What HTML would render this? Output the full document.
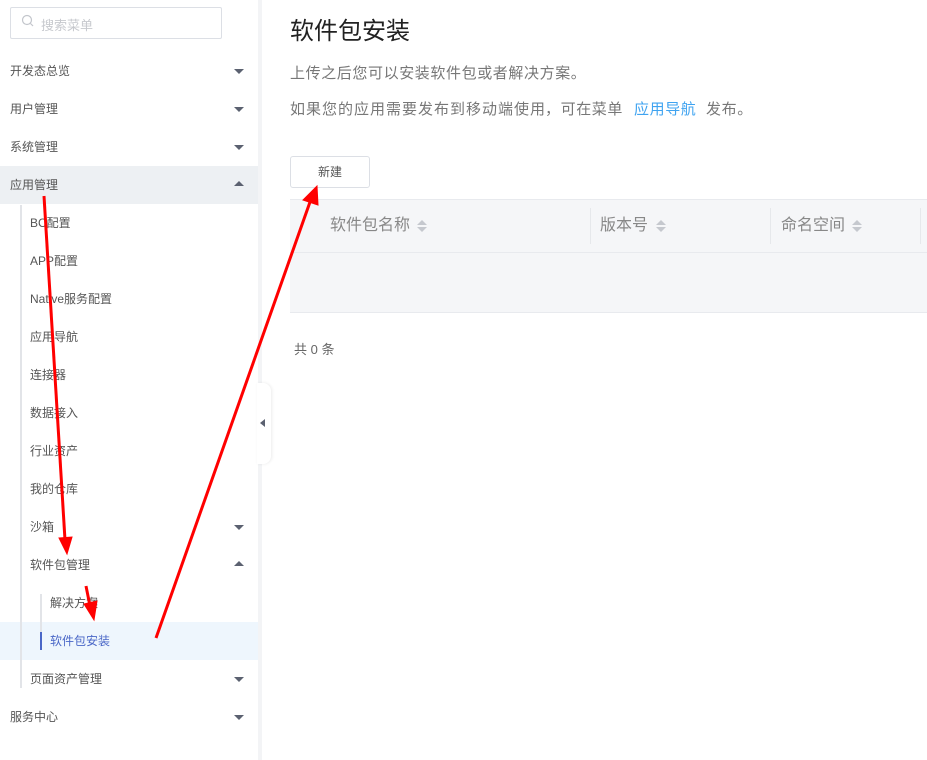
<!DOCTYPE html>
<html><head><meta charset="utf-8"><style>
*{margin:0;padding:0;box-sizing:border-box}
body{width:927px;height:760px;overflow:hidden;background:#fff;font-family:"Liberation Sans","Noto Sans CJK SC",sans-serif;position:relative}
.a{position:absolute;white-space:nowrap}
.m{font-size:12px;color:#555;line-height:14px}
.tri{position:absolute;left:234px;width:0;height:0;border-left:5px solid transparent;border-right:5px solid transparent}
.dn{border-top:5px solid #5b6170}
.up{border-bottom:5px solid #5b6170}
.srt{position:absolute;width:0;height:0;border-left:5px solid transparent;border-right:5px solid transparent}
.p{font-size:15px;color:#777;line-height:20px;letter-spacing:0.6px}
</style></head><body>
<div class="a" style="left:258px;top:0;width:4px;height:760px;background:#f3f4f6"></div>
<div class="a" style="left:10px;top:7px;width:212px;height:32px;border:1px solid #dcdfe5;border-radius:2px"></div>
<svg class="a" style="left:21px;top:14px" width="14" height="14"><circle cx="6" cy="6" r="4.5" fill="none" stroke="#c3c6cc" stroke-width="1.2"/><line x1="9.5" y1="9.5" x2="12" y2="12" stroke="#c3c6cc" stroke-width="1.2"/></svg>
<div class="a" style="left:41px;top:15px;font-size:13px;color:#c7c9ce">搜索菜单</div>

<div class="a" style="left:0;top:166px;width:258px;height:38px;background:#edf0f3"></div>
<div class="a" style="left:0;top:622px;width:258px;height:38px;background:#eef6fd"></div>
<div class="a" style="left:20px;top:205px;width:2px;height:483px;background:#e2e4e8"></div>
<div class="a" style="left:40px;top:594px;width:2px;height:56px;background:#e2e4e8"></div>
<div class="a" style="left:40px;top:632px;width:2px;height:18px;background:#4a67c7"></div>

<div class="a m" style="left:10px;top:64px">开发态总览</div><div class="tri dn" style="top:69px"></div>
<div class="a m" style="left:10px;top:102px">用户管理</div><div class="tri dn" style="top:107px"></div>
<div class="a m" style="left:10px;top:140px">系统管理</div><div class="tri dn" style="top:145px"></div>
<div class="a m" style="left:10px;top:178px">应用管理</div><div class="tri up" style="top:181px"></div>
<div class="a m" style="left:30px;top:216px">BC配置</div>
<div class="a m" style="left:30px;top:254px">APP配置</div>
<div class="a m" style="left:30px;top:292px">Native服务配置</div>
<div class="a m" style="left:30px;top:330px">应用导航</div>
<div class="a m" style="left:30px;top:368px">连接器</div>
<div class="a m" style="left:30px;top:406px">数据接入</div>
<div class="a m" style="left:30px;top:444px">行业资产</div>
<div class="a m" style="left:30px;top:482px">我的仓库</div>
<div class="a m" style="left:30px;top:520px">沙箱</div><div class="tri dn" style="top:525px"></div>
<div class="a m" style="left:30px;top:558px">软件包管理</div><div class="tri up" style="top:561px"></div>
<div class="a m" style="left:50px;top:596px">解决方案</div>
<div class="a m" style="left:50px;top:634px;color:#4a67c7">软件包安装</div>
<div class="a m" style="left:30px;top:672px">页面资产管理</div><div class="tri dn" style="top:677px"></div>
<div class="a m" style="left:10px;top:710px">服务中心</div><div class="tri dn" style="top:715px"></div>

<div class="a" style="left:257px;top:383px;width:14px;height:81px;background:#fff;border-radius:0 8px 8px 0;box-shadow:1px 0 3px rgba(0,0,0,.08)"></div>
<div class="a" style="left:260px;top:419px;width:0;height:0;border-top:4px solid transparent;border-bottom:4px solid transparent;border-right:5px solid #5b6170"></div>

<div class="a" style="left:290px;top:17px;font-size:24px;color:#222;line-height:30px">软件包安装</div>
<div class="a p" style="left:290px;top:64px">上传之后您可以安装软件包或者解决方案。</div>
<div class="a p" style="left:290px;top:100px;letter-spacing:1px">如果您的应用需要发布到移动端使用</div>
<div class="a p" style="left:545px;top:100px">，可在菜单</div>
<div class="a p" style="left:634px;top:100px;color:#3fa3f0">应用导航</div>
<div class="a p" style="left:706px;top:100px">发布。</div>

<div class="a" style="left:290px;top:156px;width:80px;height:32px;border:1px solid #dcdfe5;border-radius:3px;font-size:12px;color:#555;text-align:center;line-height:30px">新建</div>

<div class="a" style="left:290px;top:199px;width:637px;height:114px;background:#f5f6f8;border-top:1px solid #e8eaee;border-bottom:1px solid #e8eaee"></div>
<div class="a" style="left:290px;top:252px;width:637px;height:1px;background:#e8eaee"></div>
<div class="a" style="left:590px;top:208px;width:1px;height:36px;background:#e6e8eb"></div>
<div class="a" style="left:770px;top:208px;width:1px;height:36px;background:#e6e8eb"></div>
<div class="a" style="left:920px;top:208px;width:1px;height:36px;background:#e6e8eb"></div>
<div class="a" style="left:330px;top:216px;font-size:16px;color:#888;line-height:20px">软件包名称</div>
<div class="srt" style="left:417px;top:220px;border-bottom:5px solid #c5c8ce"></div><div class="srt" style="left:417px;top:227px;border-top:5px solid #c5c8ce"></div>
<div class="a" style="left:600px;top:216px;font-size:16px;color:#888;line-height:20px">版本号</div>
<div class="srt" style="left:656px;top:220px;border-bottom:5px solid #c5c8ce"></div><div class="srt" style="left:656px;top:227px;border-top:5px solid #c5c8ce"></div>
<div class="a" style="left:781px;top:216px;font-size:16px;color:#888;line-height:20px">命名空间</div>
<div class="srt" style="left:852px;top:220px;border-bottom:5px solid #c5c8ce"></div><div class="srt" style="left:852px;top:227px;border-top:5px solid #c5c8ce"></div>

<div class="a" style="left:294px;top:342px;font-size:13px;color:#666;line-height:16px">共 0 条</div>

<svg class="a" style="left:0;top:0" width="927" height="760">
<g stroke="#f00" stroke-width="3" fill="#f00">
<line x1="44" y1="196" x2="65" y2="540"/>
<polygon points="59,538 72,537 67,554" stroke-width="1"/>
<line x1="86" y1="586" x2="90" y2="606"/>
<polygon points="84,604 97,601 94,620" stroke-width="1"/>
<line x1="156" y1="638" x2="310" y2="202"/>
<polygon points="303,200 318,205 317,186" stroke-width="1"/>
</g></svg>
</body></html>
